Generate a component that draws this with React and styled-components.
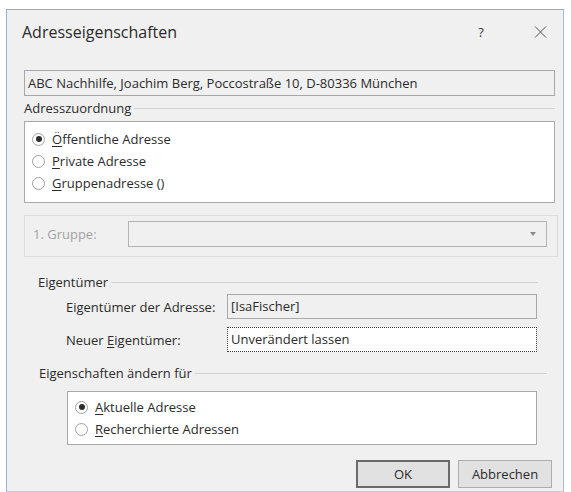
import React from "react";
import styled, { createGlobalStyle } from "styled-components";

const GlobalStyle = createGlobalStyle`
  html, body {
    margin: 0;
    padding: 0;
    background: #ffffff;
  }
  body {
    font-family: "Open Sans", "Noto Sans", sans-serif;
    font-size: 13px;
    color: #2b2b2b;
  }
`;

const Screen = styled.div`
  box-sizing: border-box;
  height: 492px;
  padding: 9px 0 0 6px;
  overflow: hidden;
`;

const Dialog = styled.div`
  box-sizing: border-box;
  width: 558px;
  height: 483px;
  background: #f0f0f0;
  border-top: 1px solid #9ea9b4;
  border-left: 1px solid #8fb3d8;
  border-right: 1px solid #a6bcd0;
  border-bottom: 1px solid #b3cde6;
  display: flex;
  flex-direction: column;
`;

const TitleBar = styled.div`
  height: 48px;
  display: flex;
  align-items: flex-start;
  padding-left: 15px;
`;

const Title = styled.div`
  flex: 1;
  margin-top: 11px;
  font-size: 16px;
  line-height: 22px;
  color: #2a2a2a;
`;

const TitleButton = styled.div`
  width: ${(p) => p.$w}px;
  margin-right: ${(p) => p.$mr || 0}px;
  height: 22px;
  margin-top: 11px;
  display: flex;
  align-items: center;
  justify-content: center;
  color: #3c3c3c;
  font-size: 13px;
`;

const Body = styled.div`
  display: flex;
  flex-direction: column;
  align-items: flex-start;
  padding: 12px 0 0 17px;
`;

const ReadOnlyField = styled.div`
  box-sizing: border-box;
  width: ${(p) => p.$w}px;
  height: ${(p) => p.$h || 25}px;
  border: 1px solid #a8a8a8;
  background: ${(p) => (p.$white ? "#ffffff" : "#f0f0f0")};
  padding-left: 3px;
  line-height: ${(p) => (p.$h || 25) - 2}px;
  white-space: nowrap;
  color: #2b2b2b;
`;

const FocusField = styled.div`
  box-sizing: border-box;
  width: ${(p) => p.$w}px;
  height: 25px;
  border: 1px dotted #3a3a3a;
  background: #ffffff;
  padding-left: 3px;
  line-height: 23px;
  white-space: nowrap;
`;

const GroupHeader = styled.div`
  display: flex;
  align-items: center;
  height: 16px;
  width: ${(p) => p.$w}px;
  margin-top: ${(p) => p.$mt}px;
  margin-left: ${(p) => p.$ml || 0}px;
  line-height: 16px;
  white-space: nowrap;
`;

const Rule = styled.div`
  flex: 1;
  height: 0;
  margin-left: 3px;
  border-top: 1px solid #d3d3d3;
`;

const WhiteBox = styled.div`
  box-sizing: border-box;
  width: ${(p) => p.$w}px;
  height: ${(p) => p.$h}px;
  margin-top: ${(p) => p.$mt}px;
  margin-left: ${(p) => p.$ml || 0}px;
  background: #ffffff;
  border: 1px solid #a9a9a9;
  padding: ${(p) => p.$pt}px 0 0 7px;
  display: flex;
  flex-direction: column;
`;

const RadioRow = styled.div`
  display: flex;
  align-items: center;
  height: 22px;
  white-space: nowrap;
`;

const RadioCircle = styled.span`
  box-sizing: border-box;
  width: 13px;
  height: 13px;
  border-radius: 50%;
  border: 1px solid #a2a2a2;
  background: #ffffff;
  margin-right: 7px;
  display: flex;
  align-items: center;
  justify-content: center;
  &::after {
    content: "";
    display: ${(p) => (p.$checked ? "block" : "none")};
    width: 6px;
    height: 6px;
    border-radius: 50%;
    background: #2e2e2e;
  }
`;

const Key = styled.u`
  text-decoration: underline;
  text-underline-offset: 2px;
  text-decoration-thickness: 1px;
`;

const DisabledPanel = styled.div`
  box-sizing: border-box;
  width: 534px;
  height: 42px;
  margin-top: 12px;
  border: 1px solid #dcdcdc;
  padding: 5px 10px 0 8px;
  display: flex;
  align-items: flex-start;
`;

const DisabledLabel = styled.div`
  width: 95px;
  line-height: 26px;
  color: #a3a3a3;
`;

const ComboBox = styled.div`
  box-sizing: border-box;
  flex: 1;
  height: 26px;
  border: 1px solid #b4b4b4;
  background: #f0f0f0;
  display: flex;
  align-items: center;
  justify-content: flex-end;
  padding-right: 10px;
`;

const FieldRow = styled.div`
  display: flex;
  align-items: center;
  margin-top: ${(p) => p.$mt}px;
  margin-left: 42px;
`;

const FieldLabel = styled.div`
  width: 161px;
  white-space: nowrap;
`;

const ButtonRow = styled.div`
  display: flex;
  justify-content: flex-end;
  gap: 8px;
  width: 528px;
  margin-top: 15px;
`;

const Button = styled.div`
  box-sizing: border-box;
  width: 94px;
  height: 28px;
  display: flex;
  align-items: center;
  justify-content: center;
  background: #e1e1e1;
  border: ${(p) => (p.$default ? "2px solid #6b6b6b" : "1px solid #adadad")};
  color: #2b2b2b;
`;

function Radio({ checked, children }) {
  return (
    <RadioRow>
      <RadioCircle $checked={checked} />
      <span>{children}</span>
    </RadioRow>
  );
}

export default function App() {
  return (
    <>
      <GlobalStyle />
      <Screen>
        <Dialog>
          <TitleBar>
            <Title>Adresseigenschaften</Title>
            <TitleButton $w={30} $mr={21}>?</TitleButton>
            <TitleButton $w={46}>
              <svg width="13" height="12" viewBox="0 0 13 12">
                <path d="M1 0.5 L12 11.5 M12 0.5 L1 11.5" stroke="#555" strokeWidth="1" fill="none" />
              </svg>
            </TitleButton>
          </TitleBar>

          <Body>
            <ReadOnlyField $w={531} $h={26}>
              ABC Nachhilfe, Joachim Berg, Poccostraße 10, D-80336 München
            </ReadOnlyField>

            <GroupHeader $w={531} $mt={4}>
              Adresszuordnung
              <Rule />
            </GroupHeader>

            <WhiteBox $w={531} $h={82} $mt={5} $pt={6}>
              <Radio checked>
                <Key>Ö</Key>ffentliche Adresse
              </Radio>
              <Radio>
                <Key>P</Key>rivate Adresse
              </Radio>
              <Radio>
                <Key>G</Key>ruppenadresse ()
              </Radio>
            </WhiteBox>

            <DisabledPanel>
              <DisabledLabel>1. Gruppe:</DisabledLabel>
              <ComboBox>
                <svg width="6" height="4" viewBox="0 0 6 4">
                  <path d="M0 0 H6 L3 4 Z" fill="#8a8a8a" />
                </svg>
              </ComboBox>
            </DisabledPanel>

            <GroupHeader $w={500} $mt={17} $ml={14}>
              Eigentümer
              <Rule />
            </GroupHeader>

            <FieldRow $mt={4}>
              <FieldLabel>Eigentümer der Adresse:</FieldLabel>
              <ReadOnlyField $w={310}>[IsaFischer]</ReadOnlyField>
            </FieldRow>

            <FieldRow $mt={8}>
              <FieldLabel>
                Neuer <Key>E</Key>igentümer:
              </FieldLabel>
              <FocusField $w={310}>Unverändert lassen</FocusField>
            </FieldRow>

            <GroupHeader $w={508} $mt={13} $ml={15}>
              Eigenschaften ändern für
              <Rule />
            </GroupHeader>

            <WhiteBox $w={470} $h={54} $mt={10} $ml={43} $pt={4}>
              <Radio checked>
                <Key>A</Key>ktuelle Adresse
              </Radio>
              <Radio>
                <Key>R</Key>echerchierte Adressen
              </Radio>
            </WhiteBox>

            <ButtonRow>
              <Button $default>OK</Button>
              <Button>Abbrechen</Button>
            </ButtonRow>
          </Body>
        </Dialog>
      </Screen>
    </>
  );
}
